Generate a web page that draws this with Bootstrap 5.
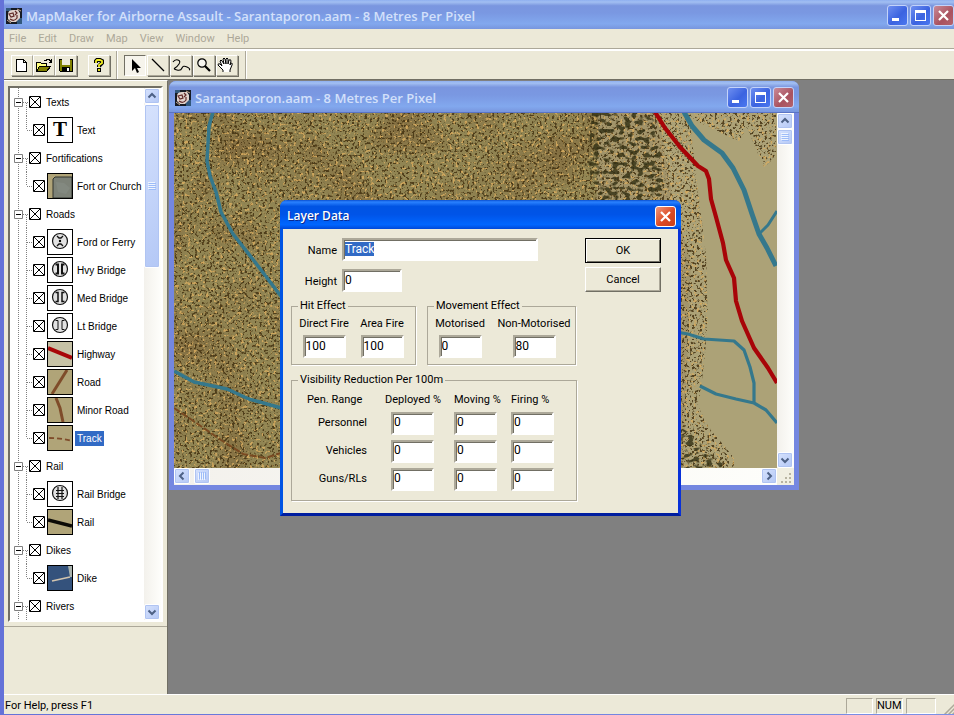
<!DOCTYPE html>
<html lang="en">
<head>
<meta charset="utf-8">
<meta name="viewport" content="width=device-width, initial-scale=1">
<title>MapMaker for Airborne Assault</title>
<link href="https://cdn.jsdelivr.net/npm/bootstrap@5.3.0/dist/css/bootstrap.min.css" rel="stylesheet">
<style>
:root{--face:#ece9d8;--shade:#aca899;--dark:#716f64}
body{font:11px/14px Roboto,"Liberation Sans",sans-serif;color:#000;background:var(--face)}
svg{display:block;flex:none}
button{font:inherit;color:inherit;padding:0}
::selection{background:#316ac5;color:#fff}
.app{border-left:4px solid #7a8ade;border-bottom:1px solid #5a6edc;border-image:linear-gradient(90deg,#6472d8,#7b90e6) 1}
.caption-bar{font:600 13px/16px "Open Sans","Noto Sans",sans-serif;color:#d3e0fa;background:linear-gradient(#8fb0f0 0,#a2bff2 7%,#7a96df 20%,#7a98e2 45%,#82a8ee 82%,#7896de 100%)}
.app-title{height:29px;margin-left:-4px;padding-left:6px;overflow:hidden;padding-top:2px}
.win-btns{gap:2px}
.win-btn{width:21px;height:21px;border:1px solid #c3d3fa;border-radius:3px;background:linear-gradient(135deg,#6e8ff0,#3b63e0 55%,#4a78f0)}
.win-btn.shut{background:linear-gradient(135deg,#c98a98,#a9525f 60%,#b4636c)}
.menu-row{height:20px;padding-left:5px;border-bottom:1px solid var(--shade)}
.menu-row a{color:var(--shade);text-decoration:none}
.menu-row nav{gap:12px}
.tools{height:31px;border-top:2px solid #fff;border-bottom:1px solid var(--dark);padding-left:7px}
.tool{width:22px;height:21px;border:1px solid;border-color:#fff var(--shade) var(--shade) #fff;background:var(--face);box-shadow:1px 1px 0 var(--dark)}
.tool svg{margin-left:-1px}
.tool.down{border-color:var(--dark) #fff #fff var(--dark);background:#f6f4ec;box-shadow:none}
.tool-gap{margin-left:11px}
.draw-tools{gap:1px;margin:0 7px 0 6px}
.split{width:2px;height:28px;border-left:1px solid var(--shade);border-right:1px solid #fff}
.tools .split:first-of-type{margin-left:6px}
.side{width:164px;border-right:1px solid var(--dark);border-top:1px solid #fff}
.tree-box{margin:5px 4px 4px;border:2px solid;border-color:var(--dark) #fff #fff var(--dark);background:#fff;flex:1 1 0}
.side-foot{height:68px;border-top:1px solid var(--shade)}
.tree{font:10px/14px "Liberation Sans",Arial,sans-serif}
.node{height:28px;white-space:nowrap}
.node label{padding:1px 2px 0;margin-left:3px}
.node .pic+label{margin-left:2px}
.node .pic{margin-left:2px;border:1px solid #000}
.tick{appearance:none;width:12px;height:12px;margin:0;flex:none;border-radius:0;background:#fff url("data:image/svg+xml,%3Csvg xmlns='http://www.w3.org/2000/svg' viewBox='0 0 12 12'%3E%3Cpath d='M.5.5h11v11H.5zM1 1l10 10M11 1L1 11' fill='none' stroke='%23000'/%3E%3C/svg%3E")}
.chosen{background:#316ac5;color:#fff}
.bar{background:linear-gradient(90deg,#f3f1ec,#fefefb)}
.bar-y{width:17px}
.bar-x{height:17px}
.sb{width:16px;height:16px;border:1px solid #fff;border-radius:2px;background:linear-gradient(135deg,#d6e2fd,#b4c8f6);box-shadow:inset 0 0 0 1px #b0c4f2}
.sb.long{height:164px}
.desk{background:#808080}
.mapwin{left:1px;top:1px;width:630px;height:409px;border:5px solid #7487e0;border-top:0;border-radius:7px 7px 0 0;background:#7487e0}
.mapwin .caption-bar{height:32px;margin:0 -5px;padding:2px 5px 0 6px;border-radius:7px 7px 0 0;border-bottom:1px solid #5a74c4}
.dlg{left:280px;top:200px;width:401px;border:3px solid #0831d9;border-color:#0054e3 #0831d9 #001ea0 #0054e3;border-top:0;border-radius:7px 7px 0 0;background:var(--face)}
.dlg-title{height:29px;margin:0 -3px;padding:3px 5px 0 7px;border-radius:7px 7px 0 0;font:600 12px/16px "Open Sans","Noto Sans",sans-serif;color:#fff;text-shadow:1px 1px #0a2a90;background:linear-gradient(#0a4fd0 0,#2a82ff 7%,#0054e3 22%,#0054e8 50%,#0066ff 85%,#0048d8 100%)}
.dlg .win-btn.shut{border-color:#fff;background:linear-gradient(135deg,#f0987c,#dc4a24 55%,#c8401c)}
.dlg-body{padding:9px 17px 12px 8px}
.box{height:23px;border:2px solid;border-color:var(--shade) #fff #fff var(--shade);box-shadow:inset 1px 1px 0 var(--dark);background:#fff;padding:0 1px 2px;font:12px/14px Roboto,"Liberation Sans",sans-serif;color:#000;border-radius:0;outline:0}
.w-short{width:43px}
.w-mid{width:60px}
.w-name{width:196px}
.name-row{gap:5px}
.lab{width:46px;text-align:right;padding-top:2px}
.push{width:76px;height:25px;background:var(--face);border:1px solid;border-color:#fff var(--dark) var(--dark) #fff;box-shadow:inset -1px -1px 0 var(--shade)}
.push.main{border:1px solid #000;box-shadow:inset 1px 1px 0 #fff,inset -1px -1px 0 var(--dark)}
.effects{gap:11px;margin-top:7px}
fieldset.group{border:1px solid var(--shade);box-shadow:1px 1px 0 #fff}
.group legend{float:none;width:auto;font:inherit;line-height:14px;margin:0 0 0 6px;padding:0 2px}
.group-hit{width:125px;height:66px}
.group-move{width:149px;height:66px}
.group-vis{width:286px;height:128px}
.fields{padding:4px 0 0 7px;gap:8px}
.group-move .fields{padding-left:8px;gap:14px}
.field{gap:4px;width:50px;white-space:nowrap}
.group-move .field{width:48px}
.group-move .field:last-child{width:72px}
.vis td,.vis th{height:28px;padding:0;font-weight:400;vertical-align:middle;white-space:nowrap}
.vis thead th{height:22px;padding-top:3px}
.vis thead th:first-child{padding-left:15px}
.vis tbody th{text-align:right;padding-right:24px}
.vis .wide-head{margin-left:-6px}
.c-name{width:99px}
.c-dep{width:63px}
.c-mov{width:57px}
.c-fir{width:50px}
.stat{height:20px;border-top:1px solid #fff;padding:2px 0 0 1px}
.panes{gap:3px}
.pane{height:16px;width:27px;border:1px solid;border-color:var(--shade) #fff #fff var(--shade)}
.pane:last-child{width:30px}
</style>
<script src="https://cdn.jsdelivr.net/npm/bootstrap@5.3.0/dist/js/bootstrap.bundle.min.js"></script>
</head>
<body>
<svg width="0" height="0" class="position-absolute" aria-hidden="true">
<defs>
<symbol id="app" viewBox="0 0 16 16"><path d="M0 0h16v16H0z" fill="#151a24"/><path d="M0 0h5v3H0zM11 10h5v6h-5z" fill="#32587c"/><path d="M2 6q0-4 5-4h5l2 3v5l-4 4H5l-3-3z" fill="#e0d2cc"/><path d="M3 6l4-1 1 3-3 1zM9 3l2 2-2 2M4 11q4 3 7-1V7" fill="none" stroke="#612a28" stroke-width="1.200"/><path d="M11 1l4 2M1 12l4 3" stroke="#c9a98e"/></symbol>
<symbol id="min" viewBox="0 0 19 19"><path d="M4 12h7v3H4z" fill="#fff"/></symbol>
<symbol id="max" viewBox="0 0 19 19"><path d="M4 4h11v11H4zM5 7v7h9V7z" fill="#fff" fill-rule="evenodd"/></symbol>
<symbol id="shut" viewBox="0 0 19 19"><path d="M5 5l9 9M14 5l-9 9" stroke="#fff" stroke-width="2.2"/></symbol>
<symbol id="up" viewBox="0 0 14 14"><path d="M3.500 8.500L7 5l3.500 3.500" fill="none" stroke="#4d6185" stroke-width="2"/></symbol>
<symbol id="grip" viewBox="0 0 14 14"><path d="M3 3.500h7M3 5.500h7M3 7.500h7M3 9.500h7" stroke="#eef4fe"/><path d="M4 4.500h7M4 6.500h7M4 8.500h7M4 10.500h7" stroke="#8cb0f8" stroke-opacity=".7"/></symbol>
<symbol id="g" viewBox="0 0 19 28"><path d="M8.500 0v28M16.500 15v13M13 14.500h6" stroke="#808080" stroke-dasharray="1 1"/><path d="M4.500 10.500h8v8h-8z" fill="#fff" stroke="#808080"/><path d="M6 14.500h5" stroke="#000"/></symbol>
<symbol id="c" viewBox="0 0 23 28"><path d="M8.500 0v28M16.500 0v28M17 14.500h6" stroke="#808080" stroke-dasharray="1 1"/></symbol>
<symbol id="ce" viewBox="0 0 23 28"><path d="M8.500 0v28M16.500 0v14M17 14.500h6" stroke="#808080" stroke-dasharray="1 1"/></symbol>
<symbol id="ring" viewBox="0 0 24 24"><circle cx="12" cy="11" r="7.500" fill="#e2e2e2" stroke="#111" stroke-width="1.200"/></symbol>
<filter id="pits" x="0" y="0" width="100%" height="100%" color-interpolation-filters="sRGB"><feTurbulence type="fractalNoise" baseFrequency=".4" numOctaves="2" seed="4"/><feColorMatrix values="0 0 0 0 .27  0 0 0 0 .2  0 0 0 0 .07  9 0 0 0 -4.900"/></filter>
<filter id="glints" x="0" y="0" width="100%" height="100%" color-interpolation-filters="sRGB"><feTurbulence type="fractalNoise" baseFrequency=".34" numOctaves="2" seed="11"/><feColorMatrix values="0 0 0 0 .85  0 0 0 0 .68  0 0 0 0 .38  0 9 0 0 -5.400"/></filter>
<filter id="clumps" x="0" y="0" width="100%" height="100%" color-interpolation-filters="sRGB"><feTurbulence type="fractalNoise" baseFrequency=".16 .24" numOctaves="1" seed="3"/><feColorMatrix values="0 0 0 0 .2  0 0 0 0 .19  0 0 0 0 .08  9 0 0 0 -4.500"/></filter>
<filter id="patches" x="0" y="0" width="100%" height="100%" color-interpolation-filters="sRGB"><feTurbulence type="fractalNoise" baseFrequency=".016" numOctaves="2" seed="8"/><feColorMatrix values="0 0 0 0 .42  0 0 0 0 .26  0 0 0 0 .12  3 0 0 0 -1.400"/></filter>
</defs>
</svg>

<div class="app d-flex flex-column vh-100 overflow-hidden">
<header class="caption-bar app-title d-flex align-items-center gap-1">
  <svg width="16" height="16"><use href="#app"/></svg>
  <span class="text-nowrap flex-grow-1">MapMaker for Airborne Assault - Sarantaporon.aam - 8 Metres Per Pixel</span>
  <div class="d-flex win-btns">
    <button class="win-btn" aria-label="Minimize"><svg width="19" height="19"><use href="#min"/></svg></button>
    <button class="win-btn" aria-label="Maximize"><svg width="19" height="19"><use href="#max"/></svg></button>
    <button class="win-btn shut" aria-label="Close"><svg width="19" height="19"><use href="#shut"/></svg></button>
  </div>
</header>
<div class="menu-row d-flex align-items-center">
  <nav class="d-flex"><a href="#">File</a><a href="#">Edit</a><a href="#">Draw</a><a href="#">Map</a><a href="#">View</a><a href="#">Window</a><a href="#">Help</a></nav>
</div>
<div class="tools d-flex align-items-center" role="toolbar" aria-label="Tools">
  <button class="tool" aria-label="New"><svg width="21" height="18" shape-rendering="crispEdges"><path d="M5.500 3.500h7l3 3v9h-10zM12.500 3.500v3h3" fill="#fff" stroke="#000"/></svg></button>
  <button class="tool" aria-label="Open"><svg width="21" height="18" shape-rendering="crispEdges"><path d="M3.500 15.500v-9h4l1 1h5v3" fill="#ffff80" stroke="#000"/><path d="M3.500 15.500l3-5h11l-4 5z" fill="#808000" stroke="#000"/><path d="M11 4.500h2l1-1h2l2 2M18.500 3v3h-3" fill="none" stroke="#000"/></svg></button>
  <button class="tool" aria-label="Save"><svg width="21" height="18" shape-rendering="crispEdges"><path d="M4.500 3.500h13v12h-12l-1-1z" fill="#808000" stroke="#000"/><path d="M7 3h8v6H7z" fill="#ece9d8"/><path d="M7 11h8v4H7z"/><path d="M12 12h2v3h-2z" fill="#fff"/></svg></button>
  <button class="tool tool-gap" aria-label="Help"><svg width="21" height="18"><path d="M8 7V5l1-1h3l2 1v2l-3 3v1" fill="none" stroke="#000" stroke-width="4"/><path d="M9 12h4v4H9z"/><path d="M8 7V5l1-1h3l2 1v2l-3 2v2M11 13v2" fill="none" stroke="#f2ee20" stroke-width="1.800"/></svg></button>
  <div class="split"></div>
  <div class="draw-tools d-flex">
  <button class="tool down" aria-label="Select"><svg width="21" height="18"><path d="M8 3v12l3-3 2 5 2-1-2-4h4z"/></svg></button>
  <button class="tool" aria-label="Line"><svg width="21" height="18"><path d="M5 3l12 12" stroke="#000" stroke-width="1.300"/></svg></button>
  <button class="tool" aria-label="Curve"><svg width="21" height="18"><path d="M3 6q2-3 5-2t1 4-4 4 2 2 5-2 5-1 2 3" fill="none" stroke="#000" stroke-width="1.100"/></svg></button>
  <button class="tool" aria-label="Zoom"><svg width="21" height="18"><circle cx="9" cy="7" r="4.200" fill="#f5f4ee" stroke="#000" stroke-width="1.200"/><path d="M12 10l5 5" stroke="#000" stroke-width="2.200"/></svg></button>
  <button class="tool" aria-label="Pan"><svg width="21" height="18"><path d="M7 16v-2L2 9q0-2 2-1l2 2-2-5q1-2 2 0l2 3-1-5q1-2 2 0l1 5V3q1-2 2 0v5l1-4q2-1 2 1l-1 4 1-2q2 0 1 2l-2 5v2" fill="#fff" stroke="#000"/></svg></button>
  </div>
  <div class="split m-0"></div>
</div>

<div class="d-flex flex-grow-1 overflow-hidden">
<aside class="side d-flex flex-column flex-shrink-0">
  <div class="tree-box d-flex overflow-hidden">
    <ul class="tree list-unstyled m-0 flex-grow-1 overflow-hidden">
      <li class="node d-flex align-items-center"><svg width="19" height="28"><use href="#g"/></svg><input class="tick" type="checkbox" checked id="n1"><label for="n1">Texts</label></li>
      <li class="node d-flex align-items-center"><svg width="23" height="28"><use href="#ce"/></svg><input class="tick" type="checkbox" checked id="n2"><svg class="pic" width="26" height="26" viewBox="0 0 24 24"><path d="M0 0h24v24H0z" fill="#fff"/><text x="12" y="18" text-anchor="middle" font-family="Liberation Serif,serif" font-weight="700" font-size="21">T</text></svg><label for="n2">Text</label></li>
      <li class="node d-flex align-items-center"><svg width="19" height="28"><use href="#g"/></svg><input class="tick" type="checkbox" checked id="n3"><label for="n3">Fortifications</label></li>
      <li class="node d-flex align-items-center"><svg width="23" height="28"><use href="#ce"/></svg><input class="tick" type="checkbox" checked id="n4"><svg class="pic" width="26" height="26" viewBox="0 0 24 24"><path d="M0 0h24v24H0z" fill="#b0a478"/><path d="M5 24V5l2-2h17v21z" fill="#7d8278" stroke="#30332c"/><path d="M8 8l8 1 6 5-4 6-8-2z" fill="#838980"/></svg><label for="n4">Fort or Church</label></li>
      <li class="node d-flex align-items-center"><svg width="19" height="28"><use href="#g"/></svg><input class="tick" type="checkbox" checked id="n5"><label for="n5">Roads</label></li>
      <li class="node d-flex align-items-center"><svg width="23" height="28"><use href="#c"/></svg><input class="tick" type="checkbox" checked id="n6"><svg class="pic" width="26" height="26" viewBox="0 0 24 24"><path d="M0 0h24v24H0z" fill="#fff"/><use href="#ring"/><path d="M9 6l2 2h2l2-2M9 16l2-2h2l2 2" fill="none" stroke="#111" stroke-width="1.300"/><circle cx="12" cy="11" r="1.200"/></svg><label for="n6">Ford or Ferry</label></li>
      <li class="node d-flex align-items-center"><svg width="23" height="28"><use href="#c"/></svg><input class="tick" type="checkbox" checked id="n7"><svg class="pic" width="26" height="26" viewBox="0 0 24 24"><path d="M0 0h24v24H0z" fill="#fff"/><use href="#ring"/><path d="M7.500 6.500h2.500v9H7.500M16.500 6.500H14v9h2.500" fill="none" stroke="#111" stroke-width="2"/></svg><label for="n7">Hvy Bridge</label></li>
      <li class="node d-flex align-items-center"><svg width="23" height="28"><use href="#c"/></svg><input class="tick" type="checkbox" checked id="n8"><svg class="pic" width="26" height="26" viewBox="0 0 24 24"><path d="M0 0h24v24H0z" fill="#fff"/><use href="#ring"/><path d="M7.500 6.500h2.500v9H7.500M16.500 6.500H14v9h2.500" fill="none" stroke="#111" stroke-width="1.500"/></svg><label for="n8">Med Bridge</label></li>
      <li class="node d-flex align-items-center"><svg width="23" height="28"><use href="#c"/></svg><input class="tick" type="checkbox" checked id="n9"><svg class="pic" width="26" height="26" viewBox="0 0 24 24"><path d="M0 0h24v24H0z" fill="#fff"/><use href="#ring"/><path d="M7.500 6.500h2.500v9H7.500M16.500 6.500H14v9h2.500" fill="none" stroke="#111"/></svg><label for="n9">Lt Bridge</label></li>
      <li class="node d-flex align-items-center"><svg width="23" height="28"><use href="#c"/></svg><input class="tick" type="checkbox" checked id="n10"><svg class="pic" width="26" height="26" viewBox="0 0 24 24"><path d="M0 0h24v24H0z" fill="#c6c2a6"/><path d="M0 6l24 10" stroke="#a80608" stroke-width="4"/></svg><label for="n10">Highway</label></li>
      <li class="node d-flex align-items-center"><svg width="23" height="28"><use href="#c"/></svg><input class="tick" type="checkbox" checked id="n11"><svg class="pic" width="26" height="26" viewBox="0 0 24 24"><path d="M0 0h24v24H0z" fill="#b0a478"/><path d="M4 24L19 0" stroke="#7f4c2a" stroke-width="3"/></svg><label for="n11">Road</label></li>
      <li class="node d-flex align-items-center"><svg width="23" height="28"><use href="#c"/></svg><input class="tick" type="checkbox" checked id="n12"><svg class="pic" width="26" height="26" viewBox="0 0 24 24"><path d="M0 0h24v24H0z" fill="#b0a478"/><path d="M8 0l4 10 3 14" fill="none" stroke="#7f4c2a" stroke-width="3"/></svg><label for="n12">Minor Road</label></li>
      <li class="node d-flex align-items-center"><svg width="23" height="28"><use href="#ce"/></svg><input class="tick" type="checkbox" checked id="n13"><svg class="pic" width="26" height="26" viewBox="0 0 24 24"><path d="M0 0h24v24H0z" fill="#b0a478"/><path d="M1 12q12 0 23 3" fill="none" stroke="#7f4c2a" stroke-width="1.800" stroke-dasharray="5 3"/></svg><label for="n13" class="chosen">Track</label></li>
      <li class="node d-flex align-items-center"><svg width="19" height="28"><use href="#g"/></svg><input class="tick" type="checkbox" checked id="n14"><label for="n14">Rail</label></li>
      <li class="node d-flex align-items-center"><svg width="23" height="28"><use href="#c"/></svg><input class="tick" type="checkbox" checked id="n15"><svg class="pic" width="26" height="26" viewBox="0 0 24 24"><path d="M0 0h24v24H0z" fill="#fff"/><use href="#ring"/><path d="M10 5v12M14 5v12M8 8.500h8M8 11.500h8M8 14.500h8" stroke="#111" stroke-width="1.200"/></svg><label for="n15">Rail Bridge</label></li>
      <li class="node d-flex align-items-center"><svg width="23" height="28"><use href="#ce"/></svg><input class="tick" type="checkbox" checked id="n16"><svg class="pic" width="26" height="26" viewBox="0 0 24 24"><path d="M0 0h24v24H0z" fill="#b0a478"/><path d="M0 10l24 6" stroke="#0c0a06" stroke-width="3.500"/></svg><label for="n16">Rail</label></li>
      <li class="node d-flex align-items-center"><svg width="19" height="28"><use href="#g"/></svg><input class="tick" type="checkbox" checked id="n17"><label for="n17">Dikes</label></li>
      <li class="node d-flex align-items-center"><svg width="23" height="28"><use href="#ce"/></svg><input class="tick" type="checkbox" checked id="n18"><svg class="pic" width="26" height="26" viewBox="0 0 24 24"><path d="M0 0h24v24H0z" fill="#34527c"/><path d="M4 15l18-4" stroke="#d2c4ae" stroke-width="1.600"/><path d="M20 0h4v11h-2z" fill="#a9b3ae"/></svg><label for="n18">Dike</label></li>
      <li class="node d-flex align-items-center"><svg width="19" height="28"><use href="#g"/></svg><input class="tick" type="checkbox" checked id="n19"><label for="n19">Rivers</label></li>
    </ul>
    <div class="bar bar-y d-flex flex-column">
      <button class="sb" aria-label="Scroll up"><svg width="14" height="14"><use href="#up"/></svg></button>
      <button class="sb long d-flex align-items-center" aria-label="Scroll thumb"><svg width="14" height="14"><use href="#grip"/></svg></button>
      <button class="sb mt-auto" aria-label="Scroll down"><svg width="14" height="14"><use href="#up" transform="rotate(180 7 7)"/></svg></button>
    </div>
  </div>
  <div class="side-foot"></div>
</aside>
<main class="desk flex-grow-1 position-relative overflow-hidden">
  <section class="mapwin position-absolute d-flex flex-column" aria-label="Map">
    <div class="caption-bar d-flex align-items-center gap-1 flex-shrink-0">
      <svg width="16" height="16"><use href="#app"/></svg>
      <span class="flex-grow-1 text-nowrap">Sarantaporon.aam - 8 Metres Per Pixel</span>
      <div class="d-flex win-btns">
        <button class="win-btn" aria-label="Minimize map"><svg width="19" height="19"><use href="#min"/></svg></button>
        <button class="win-btn" aria-label="Maximize map"><svg width="19" height="19"><use href="#max"/></svg></button>
        <button class="win-btn shut" aria-label="Close map"><svg width="19" height="19"><use href="#shut"/></svg></button>
      </div>
    </div>
    <div class="d-flex flex-grow-1 overflow-hidden">
      <svg class="flex-grow-1" width="603" height="355" viewBox="174 113 603 355" preserveAspectRatio="xMinYMin slice">
        <clipPath id="rough"><path d="M174 112H776v45l-12 10-9-20-8-20-8 14-28-12-22-13 5 40 6 50 6 50 2 60-4 50-6 40 10 20 18 22 8 10v20H174z"/></clipPath>
        <clipPath id="wood"><path d="M592 112h60l8 40 6 58h-70l-8-50zM676 425l14 8 14 14 18 16v5h-50z"/></clipPath>
        <path d="M174 112h603v356H174z" fill="#aca277"/>
        <path d="M174 112h424v356H174z" fill="#918553"/>
        <path d="M598 112h60l15 90 18 60-8 206h-90z" fill="#a2946a"/>
        <g clip-path="url(#rough)">
          <path d="M174 112h424v356H174z" filter="url(#patches)" opacity=".35"/>
          <path d="M174 112h603v356H174z" filter="url(#pits)" opacity=".85"/>
          <path d="M174 112h603v356H174z" filter="url(#glints)" opacity=".85"/>
        </g>
        <g clip-path="url(#wood)"><path d="M580 112h170v356H580z" filter="url(#clumps)" opacity=".8"/></g>
        <g fill="none" stroke-linejoin="round">
          <path d="M213 112l-4 14-2 35 3 15 6 16 5 20 12 22 22 28 28 37" stroke="#35788c" stroke-width="3.500"/>
          <path d="M174 371l20 11 33 7 22 10 36 10" stroke="#35788c" stroke-width="3.500"/>
          <path d="M174 408l18 12 29 20 22 14 22 4 16-5" stroke="#794a22" stroke-width="2" stroke-dasharray="7 2"/>
          <path d="M684 112l8 14 12 14 18 13 11 15 11 22 8 24 7 20 8 14 9 18" stroke="#35788c" stroke-width="5"/>
          <path d="M759 234l9-9 9-14" stroke="#35788c" stroke-width="3"/>
          <path d="M676 332l12 2 16 5 30 2 10 9 6 17 4 16v19M700 386l16 8 20 5 18 4 12 7 11 13" stroke="#35788c" stroke-width="3.200"/>
          <path d="M655 112l10 16 15 19 18 19 8 5 3 8 2 20 5 18 7 26 3 17 8 18 2 23 6 20 12 27 14 20 9 15" stroke="#a80408" stroke-width="4.200"/>
        </g>
      </svg>
      <div class="bar bar-y d-flex flex-column flex-shrink-0">
        <button class="sb" aria-label="Map up"><svg width="14" height="14"><use href="#up"/></svg></button>
        <button class="sb" aria-label="Map vertical thumb"><svg width="14" height="14"><use href="#grip"/></svg></button>
        <button class="sb mt-auto" aria-label="Map down"><svg width="14" height="14"><use href="#up" transform="rotate(180 7 7)"/></svg></button>
      </div>
    </div>
    <div class="bar bar-x d-flex flex-shrink-0">
      <button class="sb me-1" aria-label="Map left"><svg width="14" height="14"><use href="#up" transform="rotate(-90 7 7)"/></svg></button>
      <button class="sb" aria-label="Map horizontal thumb"><svg width="14" height="14"><use href="#grip" transform="rotate(-90 7 7)"/></svg></button>
      <button class="sb ms-auto" aria-label="Map right"><svg width="14" height="14"><use href="#up" transform="rotate(90 7 7)"/></svg></button>
      <svg width="17" height="17"><path d="M0 0h17v17H0z" fill="#f1efe2"/><path d="M12 5h2v2h-2zM8 9h2v2H8zM12 9h2v2h-2zM4 13h2v2H4zM8 13h2v2H8zM12 13h2v2h-2z" fill="#b8b4a2"/></svg>
    </div>
  </section>
</main>
</div>

<footer class="stat d-flex align-items-center flex-shrink-0">
  <span class="flex-grow-1">For Help, press F1</span>
  <div class="d-flex panes">
    <span class="pane"></span><span class="pane">NUM</span><span class="pane"></span>
  </div>
  <svg class="ms-1" width="14" height="18"><path d="M4 18L18 4M8 18L18 8M12 18l6-6" stroke="#aca899" stroke-width="1.500"/></svg>
</footer>
</div>

<form class="dlg position-absolute" role="dialog" aria-labelledby="dt">
  <div class="dlg-title d-flex align-items-center justify-content-between">
    <span id="dt">Layer Data</span>
    <button type="button" class="win-btn shut" aria-label="Close dialog"><svg width="19" height="19"><use href="#shut"/></svg></button>
  </div>
  <div class="dlg-body">
    <div class="d-flex justify-content-between">
      <div class="d-flex flex-column gap-2">
        <div class="name-row d-flex align-items-center"><label class="lab" for="nm">Name</label><input class="box w-name" id="nm" value="Track"></div>
        <div class="name-row d-flex align-items-center"><label class="lab" for="ht">Height</label><input class="box w-mid" id="ht" value="0"></div>
      </div>
      <div class="d-flex flex-column gap-1">
        <button type="button" class="push main">OK</button>
        <button type="button" class="push">Cancel</button>
      </div>
    </div>
    <div class="effects d-flex">
      <fieldset class="group group-hit"><legend>Hit Effect</legend>
        <div class="fields d-flex">
          <div class="field d-flex flex-column align-items-center"><label for="df">Direct Fire</label><input class="box w-short" id="df" value="100"></div>
          <div class="field d-flex flex-column align-items-center"><label for="af">Area Fire</label><input class="box w-short" id="af" value="100"></div>
        </div>
      </fieldset>
      <fieldset class="group group-move"><legend>Movement Effect</legend>
        <div class="fields d-flex">
          <div class="field d-flex flex-column align-items-center"><label for="mo">Motorised</label><input class="box w-short" id="mo" value="0"></div>
          <div class="field d-flex flex-column align-items-center"><label for="nmo">Non-Motorised</label><input class="box w-short" id="nmo" value="80"></div>
        </div>
      </fieldset>
    </div>
    <fieldset class="group group-vis mt-2"><legend>Visibility Reduction Per 100m</legend>
      <table class="vis">
        <colgroup><col class="c-name"><col class="c-dep"><col class="c-mov"><col class="c-fir"></colgroup>
        <thead><tr><th scope="col">Pen. Range</th><th scope="col"><span class="wide-head d-block">Deployed %</span></th><th scope="col">Moving %</th><th scope="col">Firing %</th></tr></thead>
        <tbody>
          <tr><th scope="row">Personnel</th><td><input class="box w-short" aria-label="Personnel deployed" value="0"></td><td><input class="box w-short" aria-label="Personnel moving" value="0"></td><td><input class="box w-short" aria-label="Personnel firing" value="0"></td></tr>
          <tr><th scope="row">Vehicles</th><td><input class="box w-short" aria-label="Vehicles deployed" value="0"></td><td><input class="box w-short" aria-label="Vehicles moving" value="0"></td><td><input class="box w-short" aria-label="Vehicles firing" value="0"></td></tr>
          <tr><th scope="row">Guns/RLs</th><td><input class="box w-short" aria-label="Guns deployed" value="0"></td><td><input class="box w-short" aria-label="Guns moving" value="0"></td><td><input class="box w-short" aria-label="Guns firing" value="0"></td></tr>
        </tbody>
      </table>
    </fieldset>
  </div>
</form>
<script>
const nameBox = document.getElementById('nm');
nameBox.focus();
nameBox.select();
</script>
</body>
</html>
